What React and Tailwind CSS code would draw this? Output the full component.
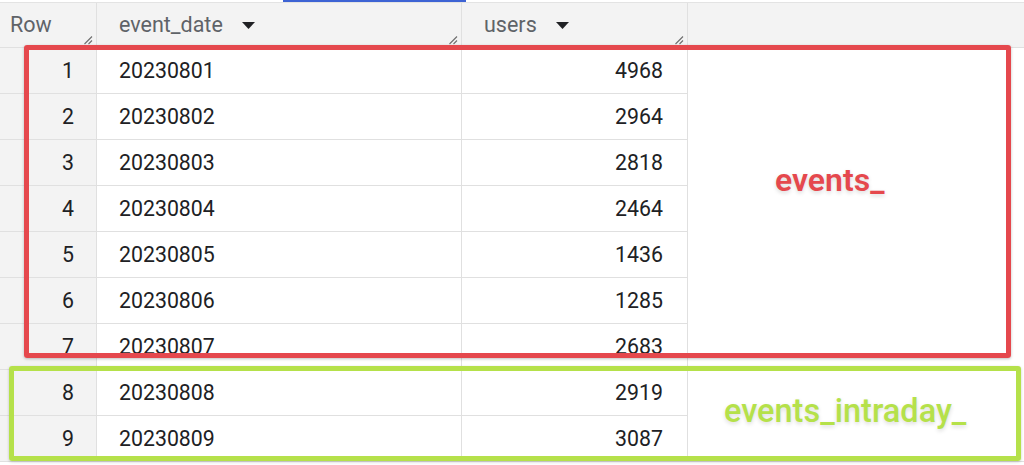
import React from "react";

const rows = [
  ["1", "20230801", "4968"],
  ["2", "20230802", "2964"],
  ["3", "20230803", "2818"],
  ["4", "20230804", "2464"],
  ["5", "20230805", "1436"],
  ["6", "20230806", "1285"],
  ["7", "20230807", "2683"],
  ["8", "20230808", "2919"],
  ["9", "20230809", "3087"],
];

function Resize() {
  return (
    <svg className="absolute right-[3px] bottom-[2px]" width="10" height="10" viewBox="0 0 10 10">
      <path d="M1.5 9 L9 1.5 M5.5 9 L9 5.5" stroke="#6f6f6f" strokeWidth="1.1" fill="none" />
    </svg>
  );
}

function Tri() {
  return (
    <svg width="13" height="7" viewBox="0 0 13 7" className="ml-[19px]">
      <path d="M0 0 L13 0 L6.5 7 Z" fill="#202124" />
    </svg>
  );
}

export default function App() {
  return (
    <div
      className="relative w-[1024px] h-[465px] overflow-hidden bg-white text-[#202124]"
      style={{ fontFamily: "Roboto, 'Noto Sans', sans-serif" }}
    >
      <div className="h-[3px] border-b border-[#e3e3e3] pl-[283px]">
        <div className="w-[183px] h-[2px] bg-[#3d63d4]" />
      </div>
      <div className="flex h-[45px] bg-[#f3f3f3] border-b border-[#e0e0e0] text-[21.5px] text-[#5f6368]">
        <div className="relative w-[97px] border-r border-[#e0e0e0] flex items-center pl-[10px] pt-[1px]">
          Row
          <Resize />
        </div>
        <div className="relative w-[365px] border-r border-[#e0e0e0] flex items-center pl-[22px] pt-[1px]">
          event_date
          <Tri />
          <Resize />
        </div>
        <div className="relative w-[226px] border-r border-[#e0e0e0] flex items-center pl-[22px] pt-[1px]">
          users
          <Tri />
          <Resize />
        </div>
        <div className="flex-1" />
      </div>
      <div className="text-[21.3px]">
        {rows.map((r, i) => (
          <div key={i} className={"flex h-[46px] " + (i === rows.length - 1 ? "border-b border-[#e0e0e0]" : "")}>
            <div className={"w-[97px] bg-[#f3f3f3] border-r border-[#e0e0e0] flex items-center justify-end pr-[22px] " + (i === rows.length - 1 ? "" : "border-b")}>
              {r[0]}
            </div>
            <div className={"w-[365px] border-r border-[#e0e0e0] flex items-center pl-[22px] " + (i === rows.length - 1 ? "" : "border-b")}>
              {r[1]}
            </div>
            <div className={"w-[226px] border-r border-[#e0e0e0] flex items-center justify-end pr-[24px] " + (i === rows.length - 1 ? "" : "border-b")}>
              {r[2]}
            </div>
            <div className="flex-1" />
          </div>
        ))}
      </div>

      <div className="absolute left-[24px] top-[45px] w-[987px] h-[313px] border-[5px] border-[#e5484d] rounded-[3px] shadow-[0_1px_3px_rgba(0,0,0,0.25)]" />
      <div className="absolute left-[9px] top-[366px] w-[1012px] h-[95px] border-[5px] border-[#b5e14a] rounded-[3px] shadow-[0_1px_3px_rgba(0,0,0,0.2)]" />

      <div className="absolute left-[775px] top-[160px] text-[32px] leading-[40px] font-semibold text-[#e5484d] [text-shadow:0_2px_4px_rgba(0,0,0,0.15)]">
        events_
      </div>
      <div className="absolute left-[724px] top-[391px] text-[32.5px] leading-[40px] font-medium text-[#b5e14a] [text-shadow:0_2px_4px_rgba(0,0,0,0.15)]">
        events_intraday_
      </div>
    </div>
  );
}
